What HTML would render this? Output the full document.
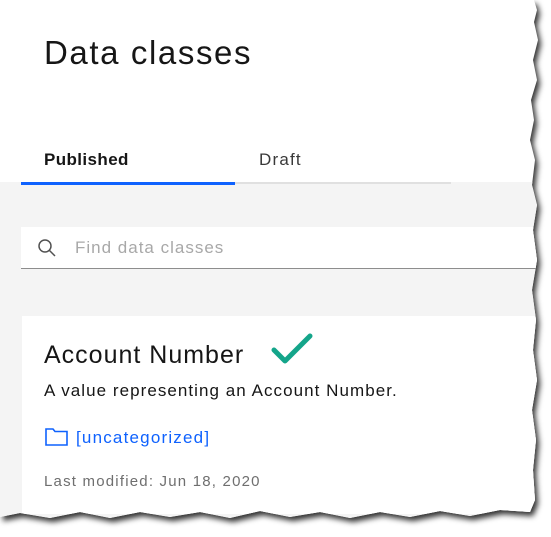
<!DOCTYPE html>
<html><head><style>
html,body{margin:0;padding:0;background:#fff;width:551px;height:537px;overflow:hidden}
.wrap{position:absolute;left:0;top:0;width:551px;height:537px;filter:drop-shadow(3px 4px 3px rgba(0,0,0,.8))}
.page{position:absolute;left:0;top:0;width:540px;height:524px;background:#fff;font-family:"Liberation Sans",sans-serif;
clip-path:polygon(0 0,534px 0,537px 10px,534px 22px,538px 40px,533px 60px,537px 80px,531px 100px,534px 120px,530px 140px,535px 160px,532px 185px,537px 205px,533px 230px,537px 260px,532px 290px,536px 320px,533px 350px,537px 380px,532px 410px,536px 440px,533px 470px,535px 500px,530px 512px,500px 510px,470px 516px,440px 511px,410px 517px,380px 512px,350px 518px,320px 512px,290px 517px,260px 511px,230px 518px,200px 512px,170px 517px,140px 512px,110px 518px,80px 512px,50px 518px,20px 513px,0 517px)}
.gray{position:absolute;left:0;top:182px;width:540px;height:345px;background:#f4f4f4}
.h1{position:absolute;left:44px;top:34px;font-size:33px;color:#161616;letter-spacing:1.6px}
.tab{position:absolute;top:150px;font-size:17px}
.card{position:absolute;left:22px;top:316px;width:520px;height:198px;background:#fff}
</style></head><body>
<div class="wrap"><div class="page">
<div class="h1">Data classes</div>
<div class="tab" style="left:44px;font-weight:bold;color:#161616;letter-spacing:0.4px">Published</div>
<div class="tab" style="left:259px;color:#393939;letter-spacing:1.2px">Draft</div>
<div class="gray"></div>
<div style="position:absolute;left:21px;top:182px;width:214px;height:3px;background:#0f62fe"></div>
<div style="position:absolute;left:235px;top:182px;width:216px;height:2px;background:#e0e0e0"></div>
<div style="position:absolute;left:21px;top:227px;width:520px;height:41px;background:#fff;border-bottom:1px solid #8d8d8d"></div>
<svg style="position:absolute;left:37px;top:238px" width="20" height="20" viewBox="0 0 20 20"><circle cx="8" cy="8" r="6" fill="none" stroke="#525252" stroke-width="1.5"/><line x1="12.5" y1="12.5" x2="18" y2="18" stroke="#525252" stroke-width="1.5"/></svg>
<div style="position:absolute;left:75px;top:238px;font-size:17px;color:#a8a8a8;letter-spacing:1px">Find data classes</div>
<div class="card"></div>
<div style="position:absolute;left:44px;top:341px;font-size:25px;color:#161616;letter-spacing:1px">Account Number</div>
<svg style="position:absolute;left:270px;top:332px" width="44" height="34" viewBox="0 0 44 34"><path d="M4 18 L15 29 L40 4" fill="none" stroke="#14a58a" stroke-width="5" stroke-linecap="round" stroke-linejoin="round"/></svg>
<div style="position:absolute;left:44px;top:381px;font-size:17px;color:#161616;letter-spacing:1.05px">A value representing an Account Number.</div>
<svg style="position:absolute;left:45px;top:427px" width="24" height="20" viewBox="0 0 24 20"><path d="M1 2 H8 L10 4.5 H22 V18 H1 Z" fill="none" stroke="#0f62fe" stroke-width="1.6"/></svg>
<div style="position:absolute;left:76px;top:428px;font-size:17px;color:#0f62fe;letter-spacing:1.2px">[uncategorized]</div>
<div style="position:absolute;left:44px;top:473px;font-size:15px;color:#6f6f6f;letter-spacing:1.2px">Last modified: Jun 18, 2020</div>
</div></div>
</body></html>
